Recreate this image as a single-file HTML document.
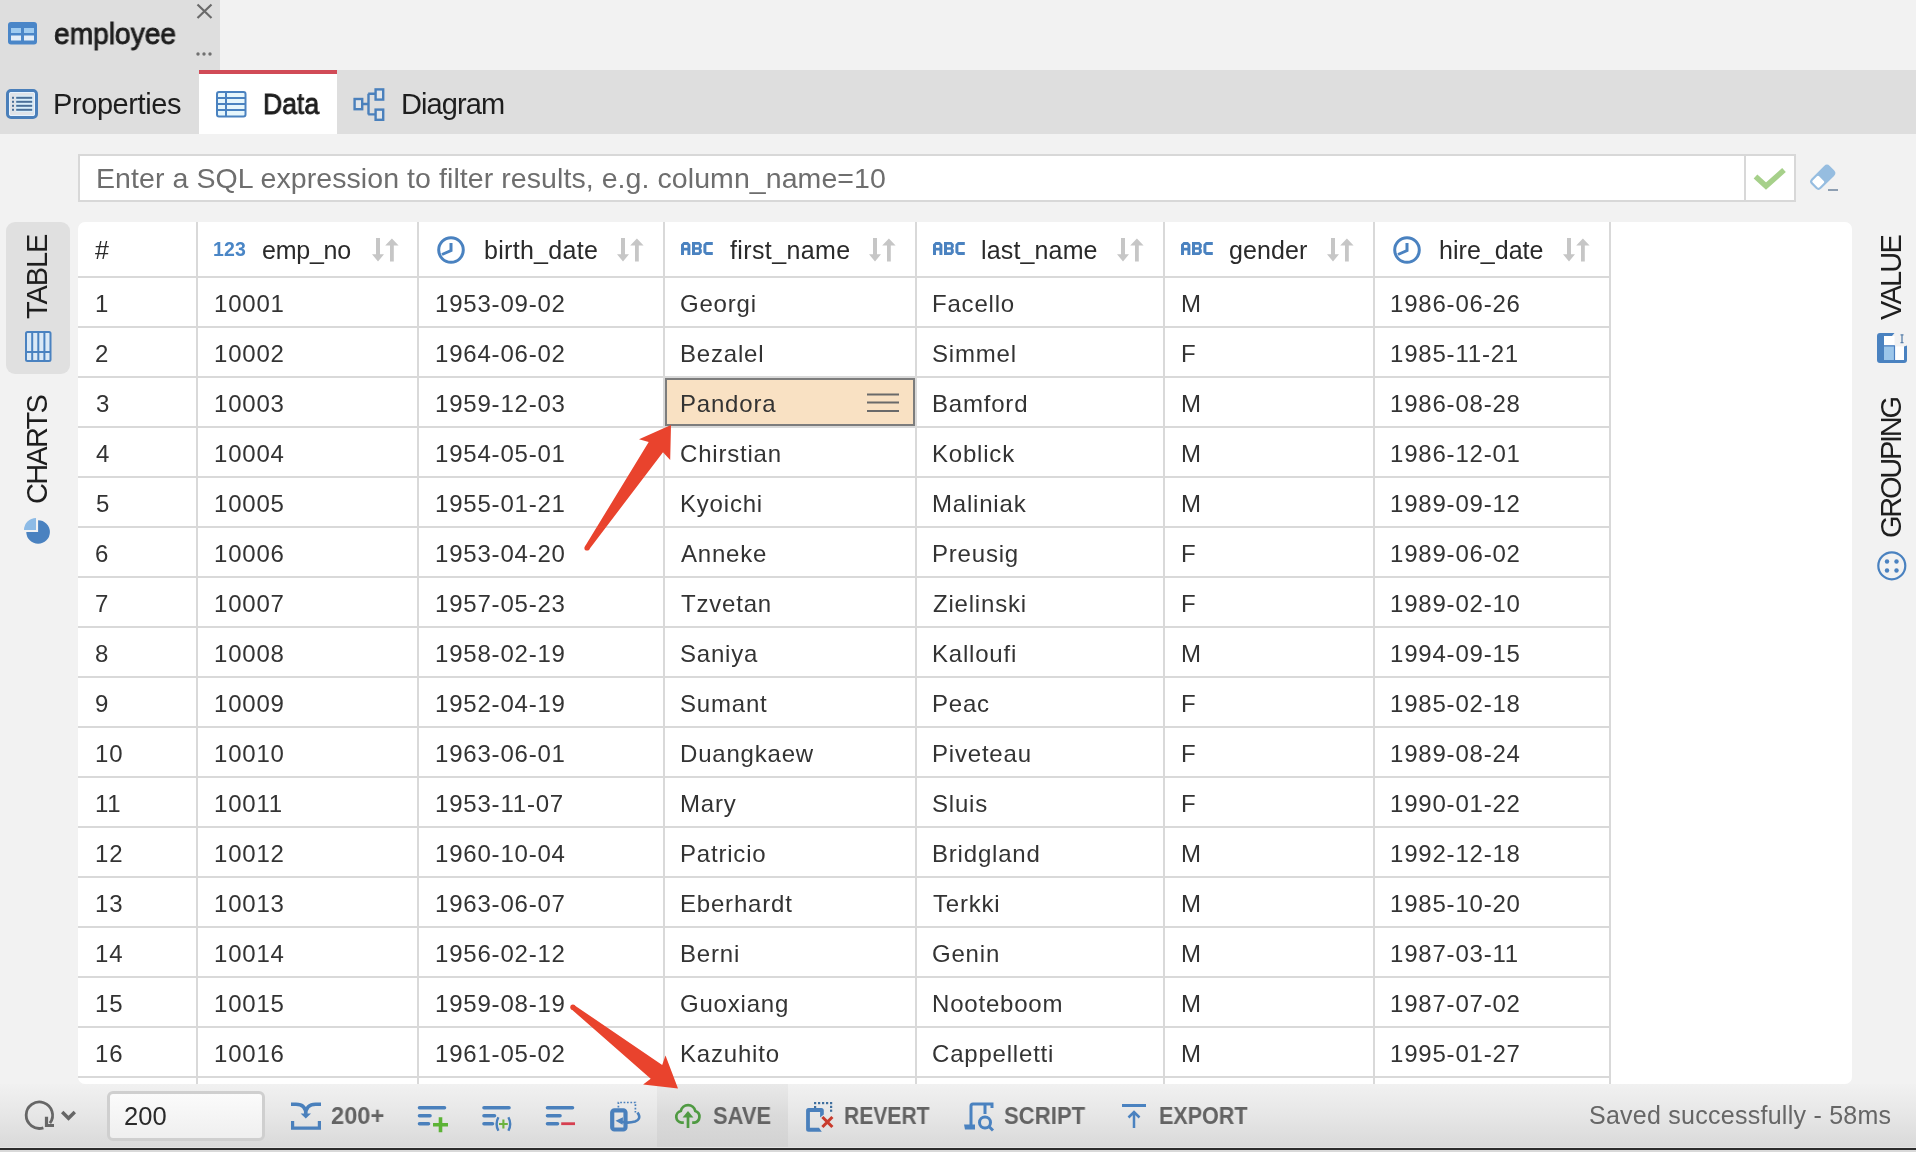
<!DOCTYPE html>
<html><head><meta charset="utf-8"><style>
*{margin:0;padding:0;box-sizing:border-box}
html,body{-webkit-font-smoothing:antialiased;width:1916px;height:1152px;overflow:hidden;background:#f2f2f2;font-family:"Liberation Sans",sans-serif;color:#333}
.a{position:absolute}
.t{position:absolute;white-space:nowrap;line-height:1;transform-origin:0 50%;-webkit-font-smoothing:antialiased;will-change:transform}
svg{position:absolute;overflow:visible}
#toptab{left:0;top:0;width:220px;height:70px;background:#dedede}
#tabbar{left:0;top:70px;width:1916px;height:64px;background:#dedede}
#datatab{left:199px;top:70px;width:138px;height:64px;background:#fff;border-top:4px solid #d14b57}
#filter{left:78px;top:154px;width:1718px;height:48px;background:#fff;border:2px solid #d8d8d8}
#chk{left:1744px;top:154px;width:2px;height:48px;background:#d8d8d8}
#vtab{left:6px;top:222px;width:64px;height:152px;background:#e0e0e0;border-radius:9px}
#grid{left:78px;top:222px;width:1774px;height:862px;background:#fff;border-radius:7px;overflow:hidden}
.hl{position:absolute;left:78px;width:1533px;height:2px;background:#d9d9d9}
.vl{position:absolute;top:222px;width:2px;height:862px;background:#d9d9d9}
#bot{left:0;top:1084px;width:1916px;height:64px;background:linear-gradient(#f1f1f1,#e6e6e6 50%,#d9d9d9)}
#botline{left:0;top:1147px;width:1916px;height:3px;background:linear-gradient(#e4e4e4 0,#e4e4e4 33%,#2c2c2c 33%,#2c2c2c 100%)}
#botline2{left:0;top:1150px;width:1916px;height:2px;background:#d9d9d9}

</style></head><body>
<div class="a" id="toptab"></div>
<div class="a" id="tabbar"></div>
<div class="a" id="datatab"></div>
<div class="a" id="filter"></div>
<div class="a" id="chk"></div>
<div class="a" id="vtab"></div>
<div class="a" id="grid"></div>
<div class="hl" style="top:276px"></div>
<div class="hl" style="top:326px"></div>
<div class="hl" style="top:376px"></div>
<div class="hl" style="top:426px"></div>
<div class="hl" style="top:476px"></div>
<div class="hl" style="top:526px"></div>
<div class="hl" style="top:576px"></div>
<div class="hl" style="top:626px"></div>
<div class="hl" style="top:676px"></div>
<div class="hl" style="top:726px"></div>
<div class="hl" style="top:776px"></div>
<div class="hl" style="top:826px"></div>
<div class="hl" style="top:876px"></div>
<div class="hl" style="top:926px"></div>
<div class="hl" style="top:976px"></div>
<div class="hl" style="top:1026px"></div>
<div class="hl" style="top:1076px"></div>
<div class="vl" style="left:196px"></div>
<div class="vl" style="left:417px"></div>
<div class="vl" style="left:663px"></div>
<div class="vl" style="left:915px"></div>
<div class="vl" style="left:1163px"></div>
<div class="vl" style="left:1373px"></div>
<div class="vl" style="left:1609px"></div>
<div class="a" style="left:665px;top:378px;width:250px;height:48px;background:#f9e1c3;border:2px solid #7d7d7d"></div>
<div class="a" id="bot"></div>
<div class="a" style="left:657px;top:1084px;width:131px;height:64px;background:linear-gradient(#e9e9e9,#dadada 50%,#d2d2d2)"></div>
<div class="a" id="botline"></div>
<div class="a" id="botline2"></div>
<div class="a" style="left:107px;top:1091px;width:158px;height:50px;border:3px solid #cfcfcf;border-radius:6px;background:linear-gradient(#fbfbfb,#efefef)"></div>
<div class="t" style="left:54.03px;top:20.45px;font-size:29px;font-weight:normal;color:#1e1e1e;-webkit-text-stroke:0.9px #1e1e1e;transform:scaleX(0.9708);">employee</div>
<div class="t" style="left:53.30px;top:90.45px;font-size:29px;font-weight:normal;color:#1e1e1e;letter-spacing:-0.408px;">Properties</div>
<div class="t" style="left:262.77px;top:90.45px;font-size:29px;font-weight:normal;color:#1e1e1e;-webkit-text-stroke:0.9px #1e1e1e;transform:scaleX(0.9147);">Data</div>
<div class="t" style="left:400.60px;top:90.45px;font-size:29px;font-weight:normal;color:#1e1e1e;letter-spacing:-0.905px;">Diagram</div>
<div class="t" style="left:96.00px;top:164.47px;font-size:28.5px;font-weight:normal;color:#6e6e6e;letter-spacing:0.072px;">Enter a SQL expression to filter results, e.g. column_name=10</div>
<div class="t" style="left:94.60px;top:238.13px;font-size:25px;font-weight:normal;color:#2a2a2a;letter-spacing:-0.600px;">#</div>
<div class="t" style="left:261.60px;top:237.53px;font-size:25px;font-weight:normal;color:#2a2a2a;letter-spacing:-0.248px;">emp_no</div>
<div class="t" style="left:483.50px;top:237.63px;font-size:25px;font-weight:normal;color:#2a2a2a;letter-spacing:0.290px;">birth_date</div>
<div class="t" style="left:730.10px;top:237.63px;font-size:25px;font-weight:normal;color:#2a2a2a;letter-spacing:0.377px;">first_name</div>
<div class="t" style="left:981.00px;top:237.63px;font-size:25px;font-weight:normal;color:#2a2a2a;letter-spacing:0.145px;">last_name</div>
<div class="t" style="left:1228.90px;top:237.63px;font-size:25px;font-weight:normal;color:#2a2a2a;letter-spacing:0.096px;">gender</div>
<div class="t" style="left:1438.60px;top:237.63px;font-size:25px;font-weight:normal;color:#2a2a2a;letter-spacing:0.032px;">hire_date</div>
<div class="t" style="left:212.50px;top:240.49px;font-size:19.5px;font-weight:bold;color:#4a86c6;letter-spacing:0.155px;">123</div>
<div class="t" style="left:94.50px;top:291.68px;font-size:24px;font-weight:normal;color:#333;letter-spacing:0.800px;">1</div>
<div class="t" style="left:214.00px;top:291.68px;font-size:24px;font-weight:normal;color:#333;letter-spacing:0.800px;">10001</div>
<div class="t" style="left:435.00px;top:291.68px;font-size:24px;font-weight:normal;color:#333;letter-spacing:0.800px;">1953-09-02</div>
<div class="t" style="left:680.20px;top:291.68px;font-size:24px;font-weight:normal;color:#333;letter-spacing:0.800px;">Georgi</div>
<div class="t" style="left:931.80px;top:291.68px;font-size:24px;font-weight:normal;color:#333;letter-spacing:0.800px;">Facello</div>
<div class="t" style="left:1180.50px;top:291.68px;font-size:24px;font-weight:normal;color:#333;letter-spacing:0.800px;">M</div>
<div class="t" style="left:1390.00px;top:291.68px;font-size:24px;font-weight:normal;color:#333;letter-spacing:0.800px;">1986-06-26</div>
<div class="t" style="left:94.50px;top:341.68px;font-size:24px;font-weight:normal;color:#333;letter-spacing:0.800px;">2</div>
<div class="t" style="left:214.00px;top:341.68px;font-size:24px;font-weight:normal;color:#333;letter-spacing:0.800px;">10002</div>
<div class="t" style="left:435.00px;top:341.68px;font-size:24px;font-weight:normal;color:#333;letter-spacing:0.800px;">1964-06-02</div>
<div class="t" style="left:680.20px;top:341.68px;font-size:24px;font-weight:normal;color:#333;letter-spacing:0.800px;">Bezalel</div>
<div class="t" style="left:931.80px;top:341.68px;font-size:24px;font-weight:normal;color:#333;letter-spacing:0.800px;">Simmel</div>
<div class="t" style="left:1180.50px;top:341.68px;font-size:24px;font-weight:normal;color:#333;letter-spacing:0.800px;">F</div>
<div class="t" style="left:1390.00px;top:341.68px;font-size:24px;font-weight:normal;color:#333;letter-spacing:0.800px;">1985-11-21</div>
<div class="t" style="left:95.50px;top:391.68px;font-size:24px;font-weight:normal;color:#333;letter-spacing:0.800px;">3</div>
<div class="t" style="left:214.00px;top:391.68px;font-size:24px;font-weight:normal;color:#333;letter-spacing:0.800px;">10003</div>
<div class="t" style="left:435.00px;top:391.68px;font-size:24px;font-weight:normal;color:#333;letter-spacing:0.800px;">1959-12-03</div>
<div class="t" style="left:680.20px;top:391.68px;font-size:24px;font-weight:normal;color:#333;letter-spacing:0.800px;">Pandora</div>
<div class="t" style="left:931.80px;top:391.68px;font-size:24px;font-weight:normal;color:#333;letter-spacing:0.800px;">Bamford</div>
<div class="t" style="left:1180.50px;top:391.68px;font-size:24px;font-weight:normal;color:#333;letter-spacing:0.800px;">M</div>
<div class="t" style="left:1390.00px;top:391.68px;font-size:24px;font-weight:normal;color:#333;letter-spacing:0.800px;">1986-08-28</div>
<div class="t" style="left:95.50px;top:441.68px;font-size:24px;font-weight:normal;color:#333;letter-spacing:0.800px;">4</div>
<div class="t" style="left:214.00px;top:441.68px;font-size:24px;font-weight:normal;color:#333;letter-spacing:0.800px;">10004</div>
<div class="t" style="left:435.00px;top:441.68px;font-size:24px;font-weight:normal;color:#333;letter-spacing:0.800px;">1954-05-01</div>
<div class="t" style="left:680.20px;top:441.68px;font-size:24px;font-weight:normal;color:#333;letter-spacing:0.800px;">Chirstian</div>
<div class="t" style="left:931.80px;top:441.68px;font-size:24px;font-weight:normal;color:#333;letter-spacing:0.800px;">Koblick</div>
<div class="t" style="left:1180.50px;top:441.68px;font-size:24px;font-weight:normal;color:#333;letter-spacing:0.800px;">M</div>
<div class="t" style="left:1390.00px;top:441.68px;font-size:24px;font-weight:normal;color:#333;letter-spacing:0.800px;">1986-12-01</div>
<div class="t" style="left:95.50px;top:491.68px;font-size:24px;font-weight:normal;color:#333;letter-spacing:0.800px;">5</div>
<div class="t" style="left:214.00px;top:491.68px;font-size:24px;font-weight:normal;color:#333;letter-spacing:0.800px;">10005</div>
<div class="t" style="left:435.00px;top:491.68px;font-size:24px;font-weight:normal;color:#333;letter-spacing:0.800px;">1955-01-21</div>
<div class="t" style="left:680.20px;top:491.68px;font-size:24px;font-weight:normal;color:#333;letter-spacing:0.800px;">Kyoichi</div>
<div class="t" style="left:931.80px;top:491.68px;font-size:24px;font-weight:normal;color:#333;letter-spacing:0.800px;">Maliniak</div>
<div class="t" style="left:1180.50px;top:491.68px;font-size:24px;font-weight:normal;color:#333;letter-spacing:0.800px;">M</div>
<div class="t" style="left:1390.00px;top:491.68px;font-size:24px;font-weight:normal;color:#333;letter-spacing:0.800px;">1989-09-12</div>
<div class="t" style="left:94.50px;top:541.68px;font-size:24px;font-weight:normal;color:#333;letter-spacing:0.800px;">6</div>
<div class="t" style="left:214.00px;top:541.68px;font-size:24px;font-weight:normal;color:#333;letter-spacing:0.800px;">10006</div>
<div class="t" style="left:435.00px;top:541.68px;font-size:24px;font-weight:normal;color:#333;letter-spacing:0.800px;">1953-04-20</div>
<div class="t" style="left:681.20px;top:541.68px;font-size:24px;font-weight:normal;color:#333;letter-spacing:0.800px;">Anneke</div>
<div class="t" style="left:931.80px;top:541.68px;font-size:24px;font-weight:normal;color:#333;letter-spacing:0.800px;">Preusig</div>
<div class="t" style="left:1180.50px;top:541.68px;font-size:24px;font-weight:normal;color:#333;letter-spacing:0.800px;">F</div>
<div class="t" style="left:1390.00px;top:541.68px;font-size:24px;font-weight:normal;color:#333;letter-spacing:0.800px;">1989-06-02</div>
<div class="t" style="left:94.50px;top:591.68px;font-size:24px;font-weight:normal;color:#333;letter-spacing:0.800px;">7</div>
<div class="t" style="left:214.00px;top:591.68px;font-size:24px;font-weight:normal;color:#333;letter-spacing:0.800px;">10007</div>
<div class="t" style="left:435.00px;top:591.68px;font-size:24px;font-weight:normal;color:#333;letter-spacing:0.800px;">1957-05-23</div>
<div class="t" style="left:681.20px;top:591.68px;font-size:24px;font-weight:normal;color:#333;letter-spacing:0.800px;">Tzvetan</div>
<div class="t" style="left:932.80px;top:591.68px;font-size:24px;font-weight:normal;color:#333;letter-spacing:0.800px;">Zielinski</div>
<div class="t" style="left:1180.50px;top:591.68px;font-size:24px;font-weight:normal;color:#333;letter-spacing:0.800px;">F</div>
<div class="t" style="left:1390.00px;top:591.68px;font-size:24px;font-weight:normal;color:#333;letter-spacing:0.800px;">1989-02-10</div>
<div class="t" style="left:94.50px;top:641.68px;font-size:24px;font-weight:normal;color:#333;letter-spacing:0.800px;">8</div>
<div class="t" style="left:214.00px;top:641.68px;font-size:24px;font-weight:normal;color:#333;letter-spacing:0.800px;">10008</div>
<div class="t" style="left:435.00px;top:641.68px;font-size:24px;font-weight:normal;color:#333;letter-spacing:0.800px;">1958-02-19</div>
<div class="t" style="left:680.20px;top:641.68px;font-size:24px;font-weight:normal;color:#333;letter-spacing:0.800px;">Saniya</div>
<div class="t" style="left:931.80px;top:641.68px;font-size:24px;font-weight:normal;color:#333;letter-spacing:0.800px;">Kalloufi</div>
<div class="t" style="left:1180.50px;top:641.68px;font-size:24px;font-weight:normal;color:#333;letter-spacing:0.800px;">M</div>
<div class="t" style="left:1390.00px;top:641.68px;font-size:24px;font-weight:normal;color:#333;letter-spacing:0.800px;">1994-09-15</div>
<div class="t" style="left:94.50px;top:691.68px;font-size:24px;font-weight:normal;color:#333;letter-spacing:0.800px;">9</div>
<div class="t" style="left:214.00px;top:691.68px;font-size:24px;font-weight:normal;color:#333;letter-spacing:0.800px;">10009</div>
<div class="t" style="left:435.00px;top:691.68px;font-size:24px;font-weight:normal;color:#333;letter-spacing:0.800px;">1952-04-19</div>
<div class="t" style="left:680.20px;top:691.68px;font-size:24px;font-weight:normal;color:#333;letter-spacing:0.800px;">Sumant</div>
<div class="t" style="left:931.80px;top:691.68px;font-size:24px;font-weight:normal;color:#333;letter-spacing:0.800px;">Peac</div>
<div class="t" style="left:1180.50px;top:691.68px;font-size:24px;font-weight:normal;color:#333;letter-spacing:0.800px;">F</div>
<div class="t" style="left:1390.00px;top:691.68px;font-size:24px;font-weight:normal;color:#333;letter-spacing:0.800px;">1985-02-18</div>
<div class="t" style="left:94.50px;top:741.68px;font-size:24px;font-weight:normal;color:#333;letter-spacing:0.800px;">10</div>
<div class="t" style="left:214.00px;top:741.68px;font-size:24px;font-weight:normal;color:#333;letter-spacing:0.800px;">10010</div>
<div class="t" style="left:435.00px;top:741.68px;font-size:24px;font-weight:normal;color:#333;letter-spacing:0.800px;">1963-06-01</div>
<div class="t" style="left:680.20px;top:741.68px;font-size:24px;font-weight:normal;color:#333;letter-spacing:0.800px;">Duangkaew</div>
<div class="t" style="left:931.80px;top:741.68px;font-size:24px;font-weight:normal;color:#333;letter-spacing:0.800px;">Piveteau</div>
<div class="t" style="left:1180.50px;top:741.68px;font-size:24px;font-weight:normal;color:#333;letter-spacing:0.800px;">F</div>
<div class="t" style="left:1390.00px;top:741.68px;font-size:24px;font-weight:normal;color:#333;letter-spacing:0.800px;">1989-08-24</div>
<div class="t" style="left:94.50px;top:791.68px;font-size:24px;font-weight:normal;color:#333;letter-spacing:0.800px;">11</div>
<div class="t" style="left:214.00px;top:791.68px;font-size:24px;font-weight:normal;color:#333;letter-spacing:0.800px;">10011</div>
<div class="t" style="left:435.00px;top:791.68px;font-size:24px;font-weight:normal;color:#333;letter-spacing:0.800px;">1953-11-07</div>
<div class="t" style="left:680.20px;top:791.68px;font-size:24px;font-weight:normal;color:#333;letter-spacing:0.800px;">Mary</div>
<div class="t" style="left:931.80px;top:791.68px;font-size:24px;font-weight:normal;color:#333;letter-spacing:0.800px;">Sluis</div>
<div class="t" style="left:1180.50px;top:791.68px;font-size:24px;font-weight:normal;color:#333;letter-spacing:0.800px;">F</div>
<div class="t" style="left:1390.00px;top:791.68px;font-size:24px;font-weight:normal;color:#333;letter-spacing:0.800px;">1990-01-22</div>
<div class="t" style="left:94.50px;top:841.68px;font-size:24px;font-weight:normal;color:#333;letter-spacing:0.800px;">12</div>
<div class="t" style="left:214.00px;top:841.68px;font-size:24px;font-weight:normal;color:#333;letter-spacing:0.800px;">10012</div>
<div class="t" style="left:435.00px;top:841.68px;font-size:24px;font-weight:normal;color:#333;letter-spacing:0.800px;">1960-10-04</div>
<div class="t" style="left:680.20px;top:841.68px;font-size:24px;font-weight:normal;color:#333;letter-spacing:0.800px;">Patricio</div>
<div class="t" style="left:931.80px;top:841.68px;font-size:24px;font-weight:normal;color:#333;letter-spacing:0.800px;">Bridgland</div>
<div class="t" style="left:1180.50px;top:841.68px;font-size:24px;font-weight:normal;color:#333;letter-spacing:0.800px;">M</div>
<div class="t" style="left:1390.00px;top:841.68px;font-size:24px;font-weight:normal;color:#333;letter-spacing:0.800px;">1992-12-18</div>
<div class="t" style="left:94.50px;top:891.68px;font-size:24px;font-weight:normal;color:#333;letter-spacing:0.800px;">13</div>
<div class="t" style="left:214.00px;top:891.68px;font-size:24px;font-weight:normal;color:#333;letter-spacing:0.800px;">10013</div>
<div class="t" style="left:435.00px;top:891.68px;font-size:24px;font-weight:normal;color:#333;letter-spacing:0.800px;">1963-06-07</div>
<div class="t" style="left:680.20px;top:891.68px;font-size:24px;font-weight:normal;color:#333;letter-spacing:0.800px;">Eberhardt</div>
<div class="t" style="left:932.80px;top:891.68px;font-size:24px;font-weight:normal;color:#333;letter-spacing:0.800px;">Terkki</div>
<div class="t" style="left:1180.50px;top:891.68px;font-size:24px;font-weight:normal;color:#333;letter-spacing:0.800px;">M</div>
<div class="t" style="left:1390.00px;top:891.68px;font-size:24px;font-weight:normal;color:#333;letter-spacing:0.800px;">1985-10-20</div>
<div class="t" style="left:94.50px;top:941.68px;font-size:24px;font-weight:normal;color:#333;letter-spacing:0.800px;">14</div>
<div class="t" style="left:214.00px;top:941.68px;font-size:24px;font-weight:normal;color:#333;letter-spacing:0.800px;">10014</div>
<div class="t" style="left:435.00px;top:941.68px;font-size:24px;font-weight:normal;color:#333;letter-spacing:0.800px;">1956-02-12</div>
<div class="t" style="left:680.20px;top:941.68px;font-size:24px;font-weight:normal;color:#333;letter-spacing:0.800px;">Berni</div>
<div class="t" style="left:931.80px;top:941.68px;font-size:24px;font-weight:normal;color:#333;letter-spacing:0.800px;">Genin</div>
<div class="t" style="left:1180.50px;top:941.68px;font-size:24px;font-weight:normal;color:#333;letter-spacing:0.800px;">M</div>
<div class="t" style="left:1390.00px;top:941.68px;font-size:24px;font-weight:normal;color:#333;letter-spacing:0.800px;">1987-03-11</div>
<div class="t" style="left:94.50px;top:991.68px;font-size:24px;font-weight:normal;color:#333;letter-spacing:0.800px;">15</div>
<div class="t" style="left:214.00px;top:991.68px;font-size:24px;font-weight:normal;color:#333;letter-spacing:0.800px;">10015</div>
<div class="t" style="left:435.00px;top:991.68px;font-size:24px;font-weight:normal;color:#333;letter-spacing:0.800px;">1959-08-19</div>
<div class="t" style="left:680.20px;top:991.68px;font-size:24px;font-weight:normal;color:#333;letter-spacing:0.800px;">Guoxiang</div>
<div class="t" style="left:931.80px;top:991.68px;font-size:24px;font-weight:normal;color:#333;letter-spacing:0.800px;">Nooteboom</div>
<div class="t" style="left:1180.50px;top:991.68px;font-size:24px;font-weight:normal;color:#333;letter-spacing:0.800px;">M</div>
<div class="t" style="left:1390.00px;top:991.68px;font-size:24px;font-weight:normal;color:#333;letter-spacing:0.800px;">1987-07-02</div>
<div class="t" style="left:94.50px;top:1041.68px;font-size:24px;font-weight:normal;color:#333;letter-spacing:0.800px;">16</div>
<div class="t" style="left:214.00px;top:1041.68px;font-size:24px;font-weight:normal;color:#333;letter-spacing:0.800px;">10016</div>
<div class="t" style="left:435.00px;top:1041.68px;font-size:24px;font-weight:normal;color:#333;letter-spacing:0.800px;">1961-05-02</div>
<div class="t" style="left:680.20px;top:1041.68px;font-size:24px;font-weight:normal;color:#333;letter-spacing:0.800px;">Kazuhito</div>
<div class="t" style="left:931.80px;top:1041.68px;font-size:24px;font-weight:normal;color:#333;letter-spacing:0.800px;">Cappelletti</div>
<div class="t" style="left:1180.50px;top:1041.68px;font-size:24px;font-weight:normal;color:#333;letter-spacing:0.800px;">M</div>
<div class="t" style="left:1390.00px;top:1041.68px;font-size:24px;font-weight:normal;color:#333;letter-spacing:0.800px;">1995-01-27</div>
<div class="t" style="left:124.30px;top:1104.41px;font-size:25.5px;font-weight:normal;color:#2a2a2a;letter-spacing:0.018px;">200</div>
<div class="t" style="left:330.60px;top:1103.96px;font-size:24.5px;font-weight:bold;color:#636363;transform:scaleX(0.9640);">200+</div>
<div class="t" style="left:713.40px;top:1104.69px;font-size:23.4px;font-weight:bold;color:#636363;transform:scaleX(0.9388);">SAVE</div>
<div class="t" style="left:844.10px;top:1104.69px;font-size:23.4px;font-weight:bold;color:#636363;transform:scaleX(0.9018);">REVERT</div>
<div class="t" style="left:1004.20px;top:1105.19px;font-size:23.4px;font-weight:bold;color:#636363;transform:scaleX(0.9458);">SCRIPT</div>
<div class="t" style="left:1158.58px;top:1105.19px;font-size:23.4px;font-weight:bold;color:#636363;transform:scaleX(0.9198);">EXPORT</div>
<div class="t" style="left:1589.00px;top:1103.23px;font-size:25px;font-weight:normal;color:#666;letter-spacing:0.256px;">Saved successfully - 58ms</div>
<div class="t" style="left:22.65px;top:318.50px;font-size:29px;font-weight:normal;color:#1e1e1e;letter-spacing:-1.094px;transform-origin:0 0;transform:rotate(-90deg)">TABLE</div>
<div class="t" style="left:22.95px;top:504.00px;font-size:29px;font-weight:normal;color:#1e1e1e;letter-spacing:-1.772px;transform-origin:0 0;transform:rotate(-90deg)">CHARTS</div>
<div class="t" style="left:1876.65px;top:319.50px;font-size:29px;font-weight:normal;color:#1e1e1e;letter-spacing:-1.776px;transform-origin:0 0;transform:rotate(-90deg)">VALUE</div>
<div class="t" style="left:1876.65px;top:537.50px;font-size:29px;font-weight:normal;color:#1e1e1e;letter-spacing:-2.263px;transform-origin:0 0;transform:rotate(-90deg)">GROUPING</div>
<!-- close X -->
<svg style="left:190px;top:0" width="30" height="24"><path d="M7.5,4.5 L21.5,18 M21.5,4.5 L7.5,18" stroke="#6a6a6a" stroke-width="2.2"/></svg>
<!-- dots -->
<svg style="left:190px;top:48px" width="30" height="12"><circle cx="8" cy="6" r="1.7" fill="#707070"/><circle cx="14" cy="6" r="1.7" fill="#707070"/><circle cx="20" cy="6" r="1.7" fill="#707070"/></svg>
<!-- employee icon -->
<svg style="left:8px;top:22px" width="30" height="23"><rect x="0" y="0" width="29" height="22.5" rx="3" fill="#4a86c8"/><rect x="3" y="6" width="10" height="5" fill="#9fcbf0"/><rect x="16" y="6" width="10" height="5" fill="#9fcbf0"/><rect x="3" y="13.5" width="10" height="5" fill="#e4eef8"/><rect x="16" y="13.5" width="10" height="5" fill="#e4eef8"/></svg>
<!-- properties icon -->
<svg style="left:6px;top:89px" width="32" height="30"><rect x="1.5" y="1.5" width="29" height="27" rx="3.5" fill="#dfe3e8" stroke="#4a7fba" stroke-width="3"/><rect x="3.5" y="3.5" width="25" height="23" rx="1.5" fill="none" stroke="#e8f4ff" stroke-width="1"/><rect x="10" y="6.5" width="17" height="16.5" fill="#d8eefc"/><g fill="#4a6f98"><rect x="6" y="7.8" width="2" height="2"/><rect x="6" y="11.8" width="2" height="2"/><rect x="6" y="15.8" width="2" height="2"/><rect x="6" y="19.8" width="2" height="2"/><rect x="10.2" y="7.8" width="16" height="2"/><rect x="10.2" y="11.8" width="16" height="2"/><rect x="10.2" y="15.8" width="16" height="2"/><rect x="10.2" y="19.8" width="16" height="2"/></g></svg>
<!-- data icon -->
<svg style="left:216px;top:91px" width="31" height="27"><rect x="1" y="1" width="28.5" height="24.5" rx="2" fill="#e6f6fc" stroke="#4a82c0" stroke-width="2"/><path d="M1,7 H29.5 M1,13 H29.5 M1,19 H29.5 M10,1 V25.5" stroke="#4a82c0" stroke-width="2"/></svg>
<!-- diagram icon -->
<svg style="left:353px;top:88px" width="33" height="33"><g fill="#e2e6ea" stroke="#4a80bc" stroke-width="2.4"><rect x="1.6" y="11" width="7.6" height="10.2"/><rect x="22.6" y="1.4" width="7.6" height="10.2"/><rect x="22.6" y="21.6" width="7.6" height="10.2"/><path d="M9.2,16 H15.5 M15.5,5.8 V26.4 M15.2,5.8 H22.6 M15.2,26.4 H22.6" fill="none"/></g></svg>
<!-- check -->
<svg style="left:1750px;top:164px" width="40" height="30"><path d="M5.5,12.5 L16,22 L34,6" fill="none" stroke="#a6d08a" stroke-width="5.5"/></svg>
<!-- eraser -->
<svg style="left:1808px;top:162px" width="34" height="32"><g transform="rotate(-45 14 16)"><rect x="2" y="9" width="26" height="14" rx="4" fill="#96bde0"/><rect x="4.2" y="11.2" width="9" height="9.6" rx="1.5" fill="#fff"/></g><rect x="20" y="27" width="10" height="2" fill="#8e9fb2"/></svg>
<!-- sort icons -->
<svg style="left:364.9px;top:232px" width="40" height="36"><path d="M11,6 H15 V22.2 H19 L13,29.5 L7,22.2 H11 Z M25,29.5 V13.6 H20.2 L26.9,6.6 L33.6,13.6 H28.8 V29.5 Z" fill="#c6c6c6"/></svg>
<svg style="left:610.3px;top:232px" width="40" height="36"><path d="M11,6 H15 V22.2 H19 L13,29.5 L7,22.2 H11 Z M25,29.5 V13.6 H20.2 L26.9,6.6 L33.6,13.6 H28.8 V29.5 Z" fill="#c6c6c6"/></svg>
<svg style="left:862.2px;top:232px" width="40" height="36"><path d="M11,6 H15 V22.2 H19 L13,29.5 L7,22.2 H11 Z M25,29.5 V13.6 H20.2 L26.9,6.6 L33.6,13.6 H28.8 V29.5 Z" fill="#c6c6c6"/></svg>
<svg style="left:1110.3px;top:232px" width="40" height="36"><path d="M11,6 H15 V22.2 H19 L13,29.5 L7,22.2 H11 Z M25,29.5 V13.6 H20.2 L26.9,6.6 L33.6,13.6 H28.8 V29.5 Z" fill="#c6c6c6"/></svg>
<svg style="left:1320.4px;top:232px" width="40" height="36"><path d="M11,6 H15 V22.2 H19 L13,29.5 L7,22.2 H11 Z M25,29.5 V13.6 H20.2 L26.9,6.6 L33.6,13.6 H28.8 V29.5 Z" fill="#c6c6c6"/></svg>
<svg style="left:1556.4px;top:232px" width="40" height="36"><path d="M11,6 H15 V22.2 H19 L13,29.5 L7,22.2 H11 Z M25,29.5 V13.6 H20.2 L26.9,6.6 L33.6,13.6 H28.8 V29.5 Z" fill="#c6c6c6"/></svg>
<!-- clock icons -->
<svg style="left:436px;top:235px" width="30" height="30"><circle cx="15" cy="15" r="12.3" fill="none" stroke="#4a82c0" stroke-width="3"/><path d="M15,8 V15.5 L6,19.5" fill="none" stroke="#4a82c0" stroke-width="3"/></svg>
<svg style="left:1392px;top:235px" width="30" height="30"><circle cx="15" cy="15" r="12.3" fill="none" stroke="#4a82c0" stroke-width="3"/><path d="M15,8 V15.5 L6,19.5" fill="none" stroke="#4a82c0" stroke-width="3"/></svg>
<svg style="left:681.0px;top:242px" width="33" height="13"><g fill="#4a82c0" fill-rule="evenodd"><path d="M0,13 V2.5 L2.5,0 H7 L9.4,2.5 V13 H6.4 V8.5 H3 V13 Z M3,3 H6.4 V5.8 H3 Z"/><path d="M11,0 H18.5 L20.8,2.2 V5 L19.8,6.4 L20.8,7.8 V10.8 L18.5,13 H11 Z M14,2.8 H17.8 V5.2 H14 Z M14,7.8 H17.8 V10.2 H14 Z"/><path d="M24.9,0 H31.8 V3 H25.4 V10 H31.8 V13 H24.9 L22.4,10.5 V2.5 Z"/></g></svg>
<svg style="left:932.8px;top:242px" width="33" height="13"><g fill="#4a82c0" fill-rule="evenodd"><path d="M0,13 V2.5 L2.5,0 H7 L9.4,2.5 V13 H6.4 V8.5 H3 V13 Z M3,3 H6.4 V5.8 H3 Z"/><path d="M11,0 H18.5 L20.8,2.2 V5 L19.8,6.4 L20.8,7.8 V10.8 L18.5,13 H11 Z M14,2.8 H17.8 V5.2 H14 Z M14,7.8 H17.8 V10.2 H14 Z"/><path d="M24.9,0 H31.8 V3 H25.4 V10 H31.8 V13 H24.9 L22.4,10.5 V2.5 Z"/></g></svg>
<svg style="left:1180.6px;top:242px" width="33" height="13"><g fill="#4a82c0" fill-rule="evenodd"><path d="M0,13 V2.5 L2.5,0 H7 L9.4,2.5 V13 H6.4 V8.5 H3 V13 Z M3,3 H6.4 V5.8 H3 Z"/><path d="M11,0 H18.5 L20.8,2.2 V5 L19.8,6.4 L20.8,7.8 V10.8 L18.5,13 H11 Z M14,2.8 H17.8 V5.2 H14 Z M14,7.8 H17.8 V10.2 H14 Z"/><path d="M24.9,0 H31.8 V3 H25.4 V10 H31.8 V13 H24.9 L22.4,10.5 V2.5 Z"/></g></svg>
<!-- hamburger in pandora cell -->
<svg style="left:866px;top:392px" width="34" height="22"><path d="M1,2.5 H33 M1,10.5 H33 M1,19 H33" stroke="#6a6a6a" stroke-width="2"/></svg>
<!-- table grid icon (left tab) -->
<svg style="left:25px;top:331px" width="27" height="32"><rect x="1" y="1" width="24.5" height="29" rx="1.5" fill="#dbe9f6" stroke="#4a82c0" stroke-width="2"/><path d="M7.2,1 V30 M13.3,1 V30 M19.4,1 V30 M1,21 H25.5" stroke="#4a82c0" stroke-width="2"/></svg>
<!-- pie icon -->
<svg style="left:23px;top:517px" width="30" height="30"><path d="M15.1,3.2 A11.8,11.8 0 1 1 3.3,15 H15.1 Z" fill="#4a82c0"/><path d="M13,1.1 V13.1 H1 A12,12 0 0 1 13,1.1 Z" fill="#8dbbe6"/></svg>
<!-- value icon -->
<svg style="left:1877px;top:333px" width="31" height="31"><path d="M0,3 Q0,0 3,0 H17.5 L15,3 H7 V27 H27 V13.5 L30,12.5 V27 Q30,30 27,30 H3 Q0,30 0,27 Z" fill="#4a82c0"/><rect x="7" y="3" width="10.5" height="9.5" fill="#fff"/><rect x="7" y="12.5" width="10" height="14.5" fill="#9cc6ea"/><rect x="17.5" y="13.5" width="9.5" height="13.5" fill="#fff"/><path d="M7,12.8 H18 M17.5,12.8 V27" stroke="#4a7fc0" stroke-width="1.2"/><path d="M23.5,1.8 H26.5 M25,1.8 V9.6 M23.5,9.6 H26.5" stroke="#5a80aa" stroke-width="1.3"/></svg>
<!-- grouping icon -->
<svg style="left:1876px;top:550px" width="32" height="32"><circle cx="15.8" cy="15.8" r="13.5" fill="none" stroke="#4a82c0" stroke-width="2.2"/><g fill="#4a82c0"><circle cx="11" cy="11.5" r="2.2"/><circle cx="20.5" cy="11.5" r="2.2"/><circle cx="11" cy="20.5" r="2.2"/><circle cx="20.5" cy="20.5" r="2.2"/></g></svg>
<!-- refresh icon -->
<svg style="left:22px;top:1100px" width="34" height="32"><path d="M21.4,27.8 A13.2,13.2 0 1 1 27.9,23.2" fill="none" stroke="#666" stroke-width="2.8"/><path d="M24.5,16.8 V25.5 H32" fill="none" stroke="#666" stroke-width="3.2"/></svg>
<svg style="left:60px;top:1109px" width="18" height="14"><path d="M2.2,3 L8.5,9.3 L14.8,3" fill="none" stroke="#666" stroke-width="3.4"/></svg>
<!-- fetch all icon -->
<svg style="left:290px;top:1101px" width="33" height="31"><path d="M2.6,20 V27.2 H29.4 V20" fill="none" stroke="#4a80bc" stroke-width="3.2"/><path d="M1,3.2 H6 Q15.8,3.2 15.8,13 Q15.8,3.2 25.6,3.2 H31" fill="none" stroke="#4a80bc" stroke-width="3.4"/><path d="M10.6,12.6 H21 L15.8,17.6 Z" fill="#4a80bc"/></svg>
<!-- add row -->
<svg style="left:417px;top:1104px" width="32" height="29"><g stroke="#4a80bc" stroke-width="3.6" stroke-linecap="round"><path d="M2.5,3.8 H27.5 M2.5,11.7 H13 M2.5,19.7 H11.5"/></g><path d="M23.5,13.2 V28.2 M16,20.7 H31" stroke="#5cb336" stroke-width="3.6"/></svg>
<!-- copy row -->
<svg style="left:482px;top:1104px" width="32" height="29"><g stroke="#4a80bc" stroke-width="3.6" stroke-linecap="round"><path d="M2,3.8 H27 M2,11.7 H12.5 M2,19.7 H10.5"/></g><path d="M16.4,13.2 Q12.8,19.8 16.4,26.8 M26.4,13.2 Q30,19.8 26.4,26.8" fill="none" stroke="#4a80bc" stroke-width="2.4"/><path d="M21.4,15.6 V24.4 M17,20 H25.8" stroke="#6cb33f" stroke-width="2.1"/></svg>
<!-- delete row -->
<svg style="left:545px;top:1104px" width="32" height="29"><g stroke="#4a80bc" stroke-width="3.6" stroke-linecap="round"><path d="M2.5,3.8 H27.5 M2.5,11.7 H15 M2.5,19.7 H12.5"/></g><path d="M16.2,19.7 H30" stroke="#d63f50" stroke-width="2.8"/></svg>
<!-- paste/copy icon -->
<svg style="left:609px;top:1101px" width="33" height="32"><path d="M9.4,6.5 V1.5 H26.4 V11.5" fill="none" stroke="#4a80bc" stroke-width="1.7" stroke-dasharray="1.7,1.7"/><rect x="3.2" y="9.4" width="13.3" height="19.1" rx="2.2" fill="none" stroke="#4a80bc" stroke-width="4.2"/><path d="M28.5,11.5 Q33,18 26,20.5 Q19,22.5 12.5,20.8" fill="none" stroke="#4a80bc" stroke-width="2.6"/><path d="M6.5,19.8 L14,16.2 L13.6,23.8 Z" fill="#4a80bc"/></svg>
<!-- save cloud -->
<svg style="left:668px;top:1098px" width="40" height="36"><path d="M15.8,24.6 H13.5 A5.9,5.9 0 0 1 12.8,13 A7.4,7.4 0 0 1 27.3,13 A6,6 0 0 1 26.5,24.6 H24.2" fill="none" stroke="#4f9a42" stroke-width="2.7"/><path d="M20,30 V17" stroke="#4f9a42" stroke-width="2.7"/><path d="M14.6,19.4 H25.4 L20,13 Z" fill="#4f9a42"/></svg>
<!-- revert -->
<svg style="left:800px;top:1098px" width="40" height="38"><path d="M8.6,9.9 H21.3 Q23.8,9.9 23.8,12.4 V16.5 L20.1,19.5 V13.9 H9.9 V29.7 H19 L21.8,33.7 H8.6 Q6.1,33.7 6.1,31.2 V12.4 Q6.1,9.9 8.6,9.9 Z" fill="#4a80bc"/><g fill="#3f6f9e"><rect x="14" y="4" width="2.2" height="2.2"/><rect x="18" y="4" width="2.2" height="2.2"/><rect x="22" y="4" width="2.2" height="2.2"/><rect x="26" y="4" width="2.2" height="2.2"/><rect x="30" y="4" width="2.2" height="2.2"/><rect x="30" y="7.8" width="2.2" height="2.2"/><rect x="30" y="11.6" width="2.2" height="2.2"/><rect x="14" y="8" width="2.2" height="2"/></g><path d="M22.4,19 L32.4,29 M32.4,19 L22.4,29" stroke="#c93b2c" stroke-width="3.1"/></svg>
<!-- script -->
<svg style="left:963px;top:1101px" width="32" height="32"><path d="M8,26 V5 Q8,3 10,3 H29 V7 M22,3 V13" fill="none" stroke="#4a82c0" stroke-width="3"/><path d="M1,23.5 H12 V28.5 H2 Z" fill="#4a82c0"/><circle cx="22" cy="21.5" r="5.5" fill="none" stroke="#4a82c0" stroke-width="3"/><path d="M26,25.5 L30,29.5" stroke="#4a82c0" stroke-width="3"/></svg>
<!-- export -->
<svg style="left:1121px;top:1103px" width="27" height="27"><path d="M1,2.5 H25" stroke="#4a82c0" stroke-width="3"/><path d="M13,25 V9 M7.5,14.5 L13,9 L18.5,14.5" fill="none" stroke="#4a82c0" stroke-width="2.5"/></svg>
<!-- red arrows -->
<svg style="left:0;top:0" width="1916" height="1152"><g fill="#e9432d"><path d="M584.9,546.6 L648.7,441.9 L639,439.3 L671,425 L670.2,460.1 L663,452.3 L589.1,549.4 Z"/><circle cx="587" cy="548" r="2.6"/><path d="M574.4,1005.2 L662.2,1065 L665.5,1055.4 L678,1088.4 L643.1,1084.6 L650.7,1078.8 L571.4,1009.2 Z"/><circle cx="572.9" cy="1007.2" r="2.6"/></g></svg>


</body></html>
